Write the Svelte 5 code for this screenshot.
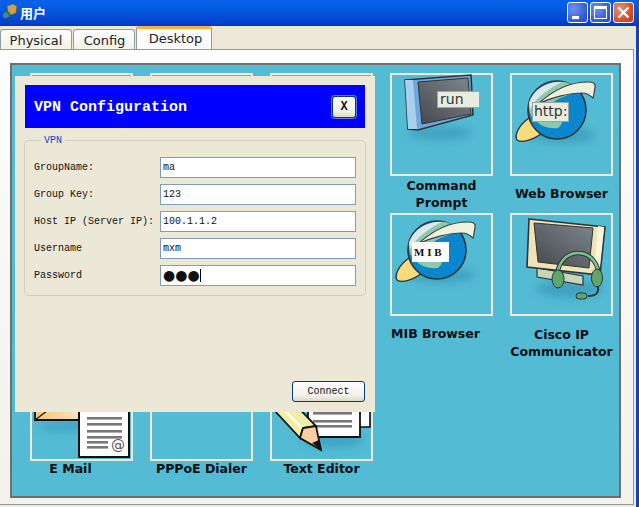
<script>
    const fields = [
        { label: 'GroupName:', value: 'ma' },
        { label: 'Group Key:', value: '123' },
        { label: 'Host IP (Server IP):', value: '100.1.1.2' },
        { label: 'Username', value: 'mxm' }
    ];
</script>

{#snippet shadow(cx, cy, rx, ry)}
    <ellipse {cx} {cy} {rx} {ry} fill="#2f8fb0" opacity="0.55" filter="url(#soft)" />
{/snippet}

{#snippet globe()}
    {@render shadow(52, 62, 34, 8)}
    <path d="M19 45C9 52 4 62 7 67c4 3 15 1 25-7z" fill="#f6dc7c" stroke="#2e3438" stroke-width="1.4" />
    <circle cx="47" cy="37" r="29" fill="#0a86ce" stroke="#2e3438" stroke-width="1.6" />
    <path d="M19 30C24 15 40 7 55 9c8 2 12 5 16 10C52 22 36 30 26 48c-4-2-8-10-7-18z" fill="#8ec8ad" />
    <path d="M19 30C23 16 38 8 52 9 42 14 28 22 20 36z" fill="#dbe8ea" />
    <path d="M26 48c5 5 12 8 22 7 3-2 4-5 4-7z" fill="#8ec8ad" />
    <path d="M28 31C42 18 58 9 78 9c5 0 8 1 7 6-1 4-1 7-2 10-3-3-7-5-11-5-12 0-30 4-44 11z" fill="#eef1dc" stroke="#3a4044" stroke-width="1.2" />
{/snippet}

{#snippet textBox(x, y, w, h)}
    <rect {x} {y} width={w} height={h} fill="#e7ecdc" stroke="#9aa5a5" />
{/snippet}

<div class="window">
    <header class="titlebar">
        <svg class="app-icon" width="16" height="18" viewBox="0 0 16 18">
            <path d="M5 3l6-2 4 2-1 7-5 2-3-3z" fill="#c9a24e" stroke="#6d5520" stroke-width="0.6" />
            <rect x="2" y="9" width="6" height="5" fill="#2e7d4f" />
            <circle cx="3.5" cy="12.5" r="2.8" fill="#5c7fa8" opacity="0.8" />
        </svg>
        <span class="title">用户</span>
        <div class="controls">
            <button class="ctl"><span class="min"></span></button>
            <button class="ctl"><span class="max"></span></button>
            <button class="ctl close">
                <svg width="13" height="13" viewBox="0 0 13 13"><path d="M1.5 1.5l10 10M11.5 1.5l-10 10" stroke="#fff" stroke-width="2.2" /></svg>
            </button>
        </div>
    </header>

    <div class="body">
        <nav class="tabs">
            <div class="tab physical">Physical</div>
            <div class="tab config">Config</div>
            <div class="tab active">Desktop</div>
        </nav>

        <main class="panel">
            <section class="desktop">
                <div class="cell"><div class="tile"></div><div class="label tall"></div></div>
                <div class="cell"><div class="tile"></div><div class="label tall"></div></div>
                <div class="cell"><div class="tile"></div><div class="label tall"></div></div>
                <div class="cell">
                    <div class="tile">
                        <svg viewBox="2 2 99 99">
                            {@render shadow(50, 60, 32, 7)}
                            <path d="M15 7L81 2l2 40-55 15-10-1z" fill="#6ea7da" stroke="#2e3438" stroke-width="1.6" />
                            <path d="M15 7l8 0 4 49-9 0z" fill="#a9cfee" />
                            <path d="M28 9l50-4 3 36-49 10z" fill="url(#screen)" stroke="#2e3438" />
                            {@render textBox(47.5, 18.5, 42, 16)}
                            <text x="50" y="31" class="icon-text">run</text>
                        </svg>
                    </div>
                    <div class="label tall">Command<br />Prompt</div>
                </div>
                <div class="cell">
                    <div class="tile">
                        <svg viewBox="2 2 99 99">
                            {@render globe()}
                            {@render textBox(22.5, 29.5, 36, 19)}
                            <text x="24" y="43" class="icon-text">http:</text>
                        </svg>
                    </div>
                    <div class="label tall">Web Browser</div>
                </div>

                <div class="cell"><div class="tile"></div><div class="label low"></div></div>
                <div class="cell"><div class="tile"></div><div class="label low"></div></div>
                <div class="cell"><div class="tile"></div><div class="label low"></div></div>
                <div class="cell">
                    <div class="tile">
                        <svg viewBox="2 2 99 99">
                            {@render globe()}
                            <rect x="22" y="29" width="37" height="20" fill="#fff" />
                            <text x="24" y="43" class="mib">M I B</text>
                        </svg>
                    </div>
                    <div class="label low shift-mib">MIB Browser</div>
                </div>
                <div class="cell">
                    <div class="tile">
                        <svg viewBox="2 2 99 99">
                            {@render shadow(60, 76, 34, 9)}
                            <path d="M27 55l46 8v9l-46-8z" fill="#c6d6b6" stroke="#2e3438" stroke-width="1.2" />
                            <path d="M19 6l76 8-5 48-73-8z" fill="#f0e3b5" stroke="#2e3438" stroke-width="1.6" />
                            <path d="M88 13l6 1-5 47-5-1z" fill="#fbf6de" />
                            <path d="M24 10l59 5-4 40-51-6z" fill="url(#screen)" stroke="#2e3438" />
                            <path d="M47 66c0-16 9-26 21-26s21 10 21 25" fill="none" stroke="#2e3438" stroke-width="4.6" />
                            <path d="M47 66c0-16 9-26 21-26s21 10 21 25" fill="none" stroke="#7fc08a" stroke-width="2.6" />
                            <ellipse cx="48" cy="66" rx="6" ry="9" fill="#5fa56c" stroke="#2e3438" />
                            <ellipse cx="87" cy="65" rx="5.5" ry="9" fill="#5fa56c" stroke="#2e3438" />
                            <path d="M88 73c1 7-2 10-10 10" fill="none" stroke="#2e3438" stroke-width="2" />
                            <rect x="66" y="80" width="11" height="6" rx="3" fill="#5fa56c" stroke="#2e3438" />
                        </svg>
                    </div>
                    <div class="label low cisco">Cisco IP<br />Communicator</div>
                </div>

                <div class="cell">
                    <div class="tile">
                        <svg viewBox="2 2 99 99">
                            {@render shadow(40, 68, 32, 5)}
                            <path d="M5 30h60v32H5z" fill="url(#env)" stroke="#111" stroke-width="1.8" />
                            <path d="M5 62l12-9" stroke="#111" stroke-width="1.2" />
                            <path d="M49 30h50v69H49z" fill="#fff" stroke="#111" stroke-width="2" />
                            <g fill="#777">
                                <rect x="57" y="59" width="35" height="2.6" />
                                <rect x="57" y="65" width="35" height="2.6" />
                                <rect x="57" y="72" width="35" height="2.6" />
                                <rect x="57" y="78" width="35" height="2.6" />
                                <rect x="57" y="83" width="21" height="2.6" />
                                <rect x="57" y="88" width="21" height="2.6" />
                            </g>
                            <text x="81" y="92" class="at">@</text>
                        </svg>
                    </div>
                    <div class="label bottom shift-mail">E Mail</div>
                </div>
                <div class="cell"><div class="tile"></div><div class="label bottom">PPPoE Dialer</div></div>
                <div class="cell">
                    <div class="tile">
                        <svg viewBox="2 2 99 99">
                            {@render shadow(62, 82, 32, 7)}
                            <path d="M60 30h40v39H60z" fill="#fff" stroke="#111" stroke-width="1.6" />
                            <path d="M38 30h52v49H38z" fill="#fff" stroke="#111" stroke-width="1.8" />
                            <g fill="#777">
                                <rect x="43" y="54" width="39" height="2.6" />
                                <rect x="43" y="62" width="39" height="2.6" />
                                <rect x="43" y="67" width="39" height="2.6" />
                            </g>
                            <path d="M-8 39L30 80l3-10 13-2L18 39z" fill="#f1eda6" stroke="#111" stroke-width="1.8" />
                            <path d="M1 39l31 31" stroke="#fdfbe4" stroke-width="3" />
                            <path d="M30 80l3-10 13-2 5 24z" fill="#f9cda0" stroke="#111" stroke-width="1.8" />
                            <path d="M42 85l9 7-2-10z" fill="#111" />
                        </svg>
                    </div>
                    <div class="label bottom">Text Editor</div>
                </div>

                <div class="dialog">
                    <div class="dialog-head">
                        <h1>VPN Configuration</h1>
                        <button class="btn close-x">X</button>
                    </div>
                    <fieldset>
                        <legend>VPN</legend>
                        {#each fields as f}
                            <div class="row">
                                <span>{f.label}</span>
                                <div class="field">{f.value}</div>
                            </div>
                        {/each}
                        <div class="row">
                            <span>Password</span>
                            <div class="field"><span class="dots">●●●</span><i class="caret"></i></div>
                        </div>
                    </fieldset>
                    <button class="btn connect">Connect</button>
                </div>
            </section>
        </main>
    </div>

    <svg class="defs" width="0" height="0">
        <defs>
            <filter id="soft" x="-50%" y="-100%" width="200%" height="300%"><feGaussianBlur stdDeviation="4" /></filter>
            <linearGradient id="screen" x1="0" y1="1" x2="1" y2="0">
                <stop offset="0" stop-color="#44484d" />
                <stop offset="1" stop-color="#7f878c" />
            </linearGradient>
            <linearGradient id="env" x1="0" y1="0" x2="1" y2="0">
                <stop offset="0" stop-color="#f6c570" />
                <stop offset="1" stop-color="#fdeedd" />
            </linearGradient>
        </defs>
    </svg>
</div>

<style>
    :global(body) {
        background: #fff;
    }

    .window {
        width: 639px;
        height: 507px;
        display: flex;
        flex-direction: column;
        background: #0a3fe0;
        overflow: hidden;
        font-family: "DejaVu Sans", sans-serif;
    }

    .defs {
        position: absolute;
    }

    .titlebar {
        height: 26px;
        flex: none;
        display: flex;
        align-items: center;
        padding: 0 5px 2px 2px;
        box-sizing: border-box;
        background: linear-gradient(#0a5ee6 0, #0562e8 12%, #0450d8 55%, #0342d0 85%, #0339b8 100%);
    }

    .app-icon {
        margin-right: 2px;
    }

    .title {
        color: #fff;
        font: bold 13px "Noto Sans CJK SC", sans-serif;
    }

    .controls {
        margin-left: auto;
        display: flex;
        gap: 2px;
    }

    .ctl {
        width: 21px;
        height: 21px;
        padding: 0;
        border: 1px solid #fff;
        border-radius: 3px;
        background: radial-gradient(circle at 30% 30%, #6f92ee, #2a55d8 75%);
        position: relative;
        display: flex;
        align-items: center;
        justify-content: center;
    }

    .min {
        position: absolute;
        left: 4px;
        bottom: 3px;
        width: 7px;
        height: 3px;
        background: #fff;
    }

    .max {
        width: 11px;
        height: 9px;
        border: 1px solid #fff;
        border-top-width: 3px;
    }

    .close {
        background: radial-gradient(circle at 30% 30%, #e8937a, #d4411d 75%);
    }

    .body {
        flex: 1;
        min-height: 0;
        margin-right: 3px;
        padding-right: 2px;
        background: #ece9d8;
        display: flex;
        flex-direction: column;
    }

    .tabs {
        height: 24px;
        flex: none;
        display: flex;
        align-items: flex-end;
        gap: 1px;
        font-size: 13px;
        color: #222;
    }

    .tab {
        height: 21px;
        box-sizing: border-box;
        display: flex;
        align-items: center;
        justify-content: center;
        border: 1px solid #919b9c;
        border-bottom: none;
        border-radius: 3px 3px 0 0;
        background: linear-gradient(#fff, #f1efe6);
    }

    .physical {
        width: 72px;
    }

    .config {
        width: 62px;
        padding-left: 1px;
    }

    .active {
        width: 76px;
        height: 24px;
        background: #fcfcfe;
        border-top: 3px solid #f6b33c;
        padding: 0 0 2px 3px;
    }

    .panel {
        flex: 1;
        min-height: 0;
        margin-bottom: 2px;
        border-top: 1px solid #919b9c;
        border-right: 1px solid #919b9c;
        border-bottom: 1px solid #919b9c;
        background: linear-gradient(#fdfdfe, #f3f1ea);
        padding: 13px 12px 0 10px;
        margin-top: -1px;
    }

    .desktop {
        position: relative;
        height: 435px;
        box-sizing: border-box;
        border: 2px solid #6f6f6f;
        background: #54bbd4;
        padding: 8px 0 0 18px;
        display: grid;
        grid-template-columns: repeat(5, 103px);
        column-gap: 17px;
        grid-template-rows: 140px 145px auto;
        align-content: start;
    }

    .tile {
        width: 103px;
        height: 103px;
        box-sizing: border-box;
        border: 2px solid #efe9d6;
    }

    .tile svg {
        display: block;
        width: 99px;
        height: 99px;
        overflow: visible;
    }

    .icon-text {
        font: 14px "DejaVu Sans", sans-serif;
        fill: #2e3438;
    }

    .mib {
        font: bold 11px "Liberation Serif", serif;
        fill: #111;
    }

    .at {
        font: 14px "DejaVu Sans", sans-serif;
        fill: #555;
    }

    .label {
        font-size: 12.5px;
        line-height: 17px;
        font-weight: 700;
        color: #0a0f14;
        text-align: center;
        white-space: nowrap;
        width: 103px;
        display: flex;
        justify-content: center;
    }

    .tall {
        height: 35px;
        align-items: center;
    }

    .low {
        padding-top: 9px;
    }

    .cisco {
        padding-top: 10px;
    }

    .bottom {
        margin-top: -1px;
    }

    .shift-mib {
        transform: translateX(-6px);
    }

    .shift-mail {
        transform: translateX(-11px);
    }

    .dialog {
        position: absolute;
        left: 3px;
        top: 11px;
        width: 360px;
        height: 336px;
        box-sizing: border-box;
        background: #ebe8d8;
        padding: 9px 10px 10px 9px;
        display: flex;
        flex-direction: column;
        font: 10px "Liberation Mono", monospace;
        color: #111;
    }

    .dialog-head {
        height: 43px;
        flex: none;
        margin-left: 1px;
        background: #0000ff;
        display: flex;
        align-items: center;
        justify-content: space-between;
        padding: 0 9px 0 9px;
    }

    h1 {
        margin: 0;
        padding-top: 1px;
        color: #fff;
        font: bold 15px "Liberation Mono", monospace;
    }

    .btn {
        padding: 0;
        font: 10px "Liberation Mono", monospace;
        color: #111;
        border: 1px solid #0a3a72;
        border-radius: 3px;
        background: linear-gradient(#fff, #f3f2ea 70%, #dcd8c8);
    }

    .close-x {
        width: 24px;
        height: 22px;
        box-shadow: 0 0 0 1px #5f7fd0;
        font-size: 12px;
        font-weight: bold;
    }

    fieldset {
        margin: 7px 0 0;
        padding: 0 9px;
        height: 161px;
        box-sizing: border-box;
        border: 1px solid #d0d0bf;
        border-radius: 5px;
        display: flex;
        flex-direction: column;
        gap: 6px;
        flex: none;
        width: 342px;
    }

    legend {
        padding: 0 3px;
        margin-left: 7px;
        height: 11px;
        line-height: 11px;
        color: #0046d5;
    }

    .row {
        display: grid;
        grid-template-columns: 126px 196px;
        align-items: center;
        height: 21px;
    }

    .row:first-of-type {
        margin-top: 11px;
    }

    .field {
        height: 21px;
        box-sizing: border-box;
        border: 1px solid #7f9db9;
        background: #fff;
        padding: 0 2px;
        line-height: 19px;
        display: flex;
        align-items: center;
    }

    .dots {
        font: 14px/19px "DejaVu Sans", sans-serif;
    }

    .caret {
        width: 1px;
        height: 13px;
        background: #000;
    }

    .connect {
        margin-top: auto;
        align-self: flex-end;
        width: 73px;
        height: 21px;
    }
</style>
